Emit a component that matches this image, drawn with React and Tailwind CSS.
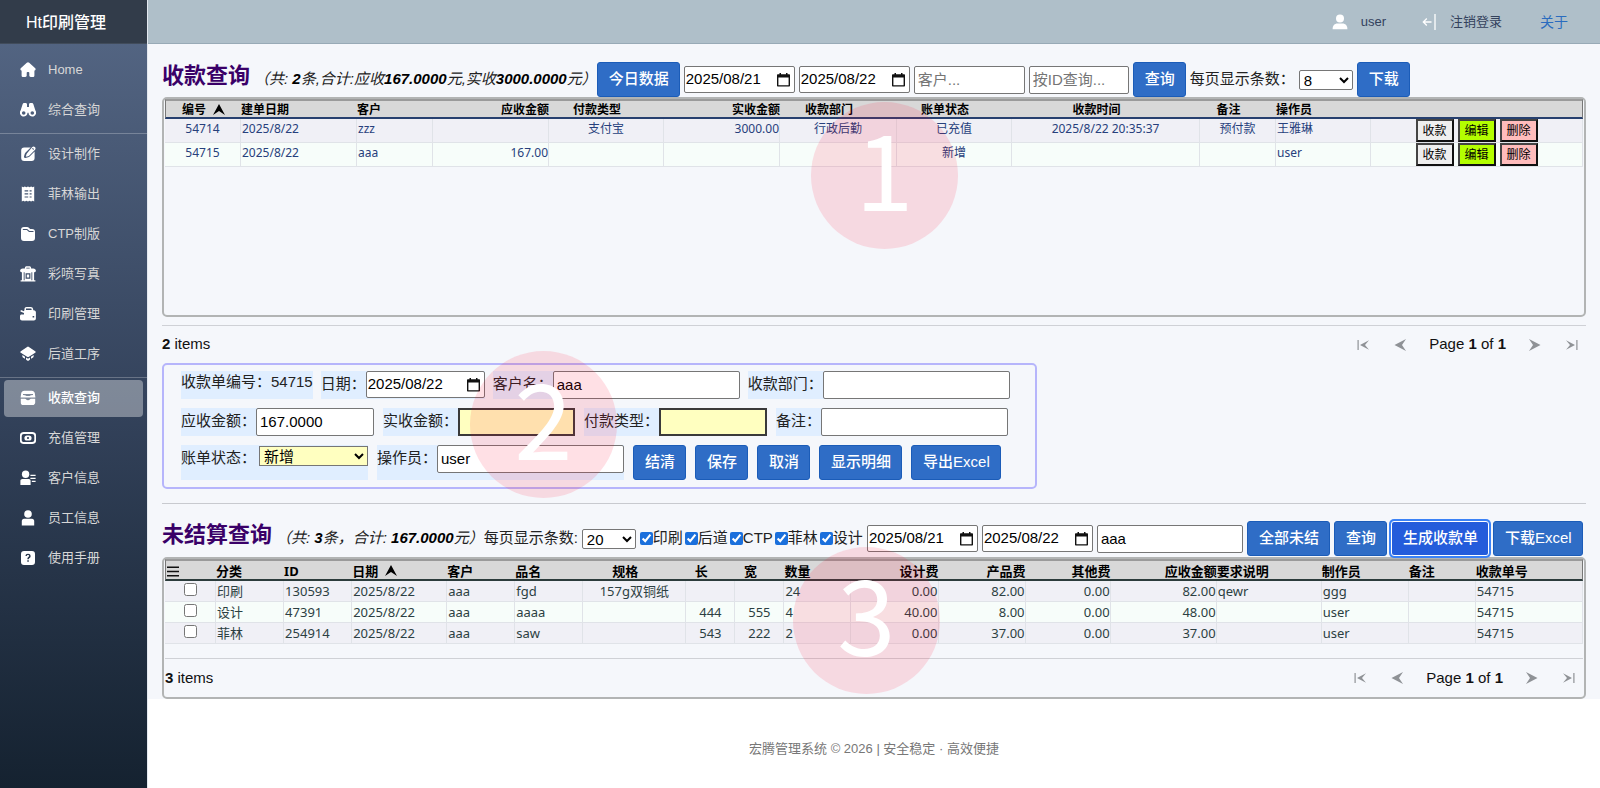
import React, { useState } from "react";

/* ---------- icons ---------- */

function Icon({ children, size = "size-4" }) {
  return (
    <svg viewBox="0 0 16 16" className={`${size} shrink-0`} fill="currentColor" aria-hidden="true">
      {children}
    </svg>
  );
}

const icons = {
  home: <path d="M6.800.8a1.800 1.800 0 0 1 2.400 0l5.800 5.100c1 .9.700 2.300-.6 2.600V13.400c0 .9-.7 1.600-1.600 1.600h-2.100c-.8 0-1.400-.6-1.400-1.400v-2.800c0-.5-.4-.8-.8-.8h-1c-.5 0-.8.4-.8.8v2.800c0 .8-.6 1.400-1.400 1.400H3.200c-.9 0-1.600-.7-1.600-1.600V8.500C.3 8.200 0 6.800 1 5.900z" />,
  binoculars: (
    <path fillRule="evenodd" d="M4.200 1h1.400C6.400 1 7 1.600 7 2.400V5h2V2.400C9 1.600 9.600 1 10.400 1h1.400c.7 0 1.300.4 1.500 1.100l2.100 6.500a3.800 3.800 0 1 1-6.900 2.100h-1A3.800 3.800 0 1 1 .6 8.600l2.100-6.500C2.900 1.400 3.500 1 4.200 1zM3.700 9.200a1.800 1.800 0 1 0 0 3.600 1.800 1.800 0 0 0 0-3.600zm8.600 0a1.800 1.800 0 1 0 0 3.600 1.800 1.800 0 0 0 0-3.600z" />
  ),
  edit: (
    <>
      <path d="M4.200 1.400h6.500L5.600 6.500c-.4.4-.7.900-.9 1.500l-.7 2.600c-.2.900.500 1.700 1.400 1.400l2.700-.7c.6-.1 1.100-.4 1.500-.8l5-5V12a3 3 0 0 1-3 3H4.200a3 3 0 0 1-3-3V4.400a3 3 0 0 1 3-3z" />
      <path d="M12.300.9a2 2 0 0 1 2.800 2.800L9.100 9.700a2 2 0 0 1-.9.500l-2.400.6.6-2.400c.1-.3.300-.6.500-.9zM12 2.600l1.300 1.300.7-.8-1.200-1.200z" fillRule="evenodd" />
    </>
  ),
  receipt: (
    <path fillRule="evenodd" d="M1.800.4l1.500.9L4.900.4l1.500.9L8 .4l1.500.9 1.600-.9 1.500.9 1.600-.9v15.200l-1.600-.9-1.500.9-1.600-.9-1.500.9-1.600-.9-1.500.9-1.600-.9-1.500.9zM4.600 4.200v1.200h3.600V4.200zm5 0v1.200h2V4.200zm-5 3.100v1.200h3.600V7.300zm5 0v1.200h2V7.300zm-5 3.100v1.200h3.600v-1.200zm5 0v1.200h2v-1.200z" />
  ),
  folder: (
    <path fillRule="evenodd" d="M4 1h3.200c.5 0 1 .2 1.400.5L10.200 3H12a3 3 0 0 1 3 3v6a3 3 0 0 1-3 3H4a3 3 0 0 1-3-3V4a3 3 0 0 1 3-3zM2.900 3.300c-.3.300-.2.700.2.700H6.300c.3 0 .6.100.8.300l1.300 1.200c.5.400 1 .6 1.600.6h3.800c-.1-.7-.5-1-1.100-1H10c-.3 0-.6-.1-.8-.3L7.800 3.500c-.5-.4-1-.5-1.500-.5H3.700c-.3 0-.6.100-.8.3z" />
  ),
  photo: (
    <path fillRule="evenodd" d="M4.900 2.400v-.6C4.900.9 5.700.2 6.600.2h2.800c.9 0 1.700.7 1.700 1.600v.6h2.200c1.600 0 2.600 1 2.600 2.400 0 .8-.6 1.400-1.400 1.400h-.4v8h1.300v1.400H.6v-1.400h1.300v-8h-.4C.7 6.200.1 5.600.1 4.800c0-1.400 1-2.400 2.600-2.400zm1.400 0h3.400v-.7H6.300zM3.700 6.200v8h.9v-8zm7.700 0v8h.9v-8zM5.600 7.200v5.600h4.800V7.200zm1.200 1.200h2.400v3.200H6.800z" />
  ),
  printer: (
    <path fillRule="evenodd" d="M4.500 3.400V3C4.500 1.700 5.300.9 6.600.9h4.200c1.300 0 2.100.7 2.300 2l.2 1.300h.5c1.200 0 2.100 1 2.100 2.100V12.600c0 1.100-.9 2-2 2H2c-1.100 0-2-.9-2-2V10c0-1 .7-1.600 1.600-1.600H4V7.100L.4 5.400l.5-1.400 3.100 1.300zM6 2.700v1.400h5.700l-.2-1.100c-.1-.5-.4-.6-.8-.6H6.500c-.4 0-.5.100-.5.300zM12.600 10v1.600h1.600V10z" />
  ),
  layers: (
    <>
      <path d="M7.100.9a1.700 1.700 0 0 1 1.800 0l6.300 4.300c.6.400.6 1.200 0 1.600l-2.700 1.800L8.900 10.800a1.700 1.700 0 0 1-1.800 0L.8 6.800a1 1 0 0 1 0-1.600z" />
      <path d="M2.400 9.100l2.600 1.700v2l-2.100-1.400c-.4-.2-.5-.5-.5-.9zm3.600 2.500l1 .6c.6.400 1.400.4 2 0l1-.6v2l-1.100.8c-.6.400-1.200.4-1.800 0L6 13.600zm5-.8l2.600-1.700v1.400c0 .4-.1.700-.5.900L11 12.800z" />
    </>
  ),
  drawer: (
    <>
      <path d="M4.200.8h7.600c1.500 0 2.700 1 3 2.400l.6 4.200H.6l.6-4.200C1.500 1.800 2.700.8 4.200.8zM3 4v1l1.800.2c.3 0 .5.2.7.4.3.3.6.5 1 .5h3c.4 0 .7-.2 1-.5.2-.2.4-.4.7-.4L13 5V4z" fillRule="evenodd" />
      <path d="M.8 8.700h4.300c.4 0 .7.2.9.5.4.7 1.100 1.100 2 1.100s1.600-.4 2-1.100c.2-.3.5-.5.9-.5h4.300v3.700c0 1.500-1.100 2.600-2.600 2.600H3.400a2.600 2.600 0 0 1-2.600-2.600z" />
    </>
  ),
  money: (
    <>
      <rect x=".8" y="3" width="14.400" height="10" rx="3" fill="none" stroke="currentColor" strokeWidth="1.800" />
      <path fillRule="evenodd" d="M7 5.400h2a2.600 2.600 0 0 1 0 5.200H7a2.600 2.600 0 0 1 0-5.200zm1 1.500a1.100 1.100 0 1 0 0 2.200 1.100 1.100 0 0 0 0-2.200z" />
    </>
  ),
  contact: (
    <>
      <circle cx="5.600" cy="4.300" r="3.700" />
      <path d="M2.400 9h6.400c1 0 1.800.8 1.800 1.800V15H.4v-4.200C.4 9.800 1.300 9 2.400 9zM10.400 4.800h5.200v1.300h-5.200zm0 3h5.200v1.300h-5.200zm1.400 3h3.800v1.300h-3.800z" />
    </>
  ),
  person: (
    <>
      <circle cx="8" cy="4" r="3.800" />
      <path d="M4 8.800h8c1.200 0 2.200 1 2.200 2.200v4.400H1.800V11C1.800 9.800 2.800 8.800 4 8.800z" />
    </>
  ),
  help: (
    <path fillRule="evenodd" d="M4 1h8a3 3 0 0 1 3 3v8a3 3 0 0 1-3 3H4a3 3 0 0 1-3-3V4a3 3 0 0 1 3-3zm4 2.800c-1.500 0-2.500.9-2.500 2.200h1.400c0-.6.400-1 1.100-1s1.100.4 1.100.9c0 .5-.2.700-.8 1.200-.7.600-1 1.100-.9 2.200h1.400c0-.6.200-.8.800-1.300.6-.5 1-1.100 1-2.100 0-1.300-1.100-2.100-2.600-2.100zm-.7 6.500v1.500h1.500v-1.500z" />
  ),
};

function SortArrow({ hidden }) {
  return (
    <svg viewBox="0 0 12 12" className={`ml-[7px] size-3 shrink-0 ${hidden ? "invisible" : ""}`} aria-hidden="true">
      <path d="M6 0l6 11-6-4-6 4z" fill="#000" />
    </svg>
  );
}

/* ---------- shared controls ---------- */

function PrimaryButton({ children, focused }) {
  return (
    <button
      type="button"
      className={`h-[35px] shrink-0 whitespace-nowrap rounded-[3px] border pr-[10px] pl-[11px] font-medium text-white ${
        focused
          ? "border-white bg-[#245cdb] ring-2 ring-[#3b82f6]"
          : "border-[#1b5cb8] bg-[#2f6dc6]"
      }`}
    >
      {children}
    </button>
  );
}

function DateBox({ label, id, value, width = "w-[111px]" }) {
  return (
    <span className={`flex h-[27px] shrink-0 items-center rounded-[2px] border border-[#767676] bg-white pr-1 ${width}`}>
      <input id={id} type="text" aria-label={label} defaultValue={value} className="w-full min-w-0 bg-transparent pl-px text-black outline-none" />
      <svg viewBox="0 0 13 14" className="h-[14px] w-[13px] shrink-0" aria-hidden="true">
        <path fillRule="evenodd" fill="#111" d="M2.500 0h1.500v1.300h5V0h1.500v1.300H12c.6 0 1 .4 1 1V12.600c0 .6-.4 1-1 1H1c-.6 0-1-.4-1-1V2.300c0-.6.4-1 1-1h1.500zM1.400 4.600v7.600h10.200V4.600z" />
      </svg>
    </span>
  );
}

const boxClass = "h-[28px] shrink-0 rounded-[2px] border border-[#767676] bg-white px-[3px] pb-px text-black placeholder:text-[#757575]";
const sizeSelectClass = "h-5 w-[54px] shrink-0 rounded-[2px] border border-[#767676] bg-white font-['Liberation_Sans',sans-serif] text-black";

function PagerIcon({ kind }) {
  const shapes = {
    first: <path d="M.5 1h1.200v10H.5zM12 1.200L8 6l4 4.800L3 6z" />,
    prev: <path d="M12 0L8 6l4 6L.5 6z" />,
    next: <path d="M0 0l4 6-4 6 11.500-6z" />,
    last: <path d="M10.300 1h1.200v10h-1.200zM0 1.200L4 6l-4 4.800L9 6z" />,
  };
  return (
    <svg viewBox="0 0 12 12" className="size-3" fill="#8f9296" aria-hidden="true">
      {shapes[kind]}
    </svg>
  );
}

function Pager({ count, height }) {
  const btn = (kind, label) => (
    <button type="button" aria-label={label} className="flex size-7 items-center justify-center">
      <PagerIcon kind={kind} />
    </button>
  );
  return (
    <div className={`flex items-center justify-between text-[#111] ${height}`}>
      <div>
        <b>{count}</b> items
      </div>
      <nav className="flex items-center gap-[9px]" aria-label="分页">
        {btn("first", "首页")}
        {btn("prev", "上一页")}
        <div className="mx-[6px]">
          Page <b>1</b> of <b>1</b>
        </div>
        {btn("next", "下一页")}
        {btn("last", "末页")}
      </nav>
    </div>
  );
}

/* ---------- tables ---------- */

const alignClass = { left: "text-left pl-px", center: "text-center", right: "text-right" };
const justifyClass = { left: "justify-start", center: "justify-center", right: "justify-end" };

function Grid({ columns, rows, size, headHeight, rowHeight, tone, rule }) {
  const total = columns.reduce((sum, c) => sum + c.w, 0);
  return (
    <table className={`w-full table-fixed border-separate border-spacing-0 font-['Noto_Sans','Noto_Sans_CJK_SC',sans-serif] ${size}`}>
      <colgroup>
        {columns.map((c, i) => (
          <col key={i} style={{ width: `${(c.w / total) * 100}%` }} />
        ))}
      </colgroup>
      <thead>
        <tr>
          {columns.map((c, i) => (
            <th
              key={i}
              className={`border-t-2 border-b-2 border-t-[#9a9a9a] bg-[#d8d8d8] p-0 font-bold text-black first:border-l first:border-l-[#777] last:border-r last:border-r-[#777] ${headHeight} ${rule}`}
            >
              <div className={`flex items-center pt-[2px] whitespace-nowrap leading-[14px] ${justifyClass[c.align]}`}>
                {c.head}
                {c.head && (c.sorted || c.align === "center") ? <SortArrow hidden={!c.sorted} /> : null}
              </div>
            </th>
          ))}
        </tr>
      </thead>
      <tbody className={tone}>
        {rows.map((row, r) => (
          <tr key={r} className="odd:bg-[#f0f0f6] even:bg-[#f7fdfa]">
            {row.map((cell, i) => (
              <td
                key={i}
                className={`border-r border-b border-[#e0e3e8] py-0 align-top whitespace-nowrap ${rowHeight} ${alignClass[columns[i].align]}`}
              >
                {cell}
              </td>
            ))}
          </tr>
        ))}
      </tbody>
    </table>
  );
}

function RowActions() {
  const base = "h-[23px] w-[38px] border-2 border-t-[#444] border-l-[#444] border-r-[#111] border-b-[#111] text-xs leading-4 text-black";
  return (
    <div className="flex justify-center gap-1">
      <button type="button" className={`${base} bg-[#efefef]`}>收款</button>
      <button type="button" className={`${base} bg-[#b4ff00]`}>编辑</button>
      <button type="button" className={`${base} bg-[#ffbcbc]`}>删除</button>
    </div>
  );
}

const receiptColumns = [
  { head: "编号", w: 76, align: "center", sorted: true },
  { head: "建单日期", w: 116, align: "left" },
  { head: "客户", w: 76, align: "left" },
  { head: "应收金额", w: 116, align: "right" },
  { head: "付款类型", w: 115, align: "center" },
  { head: "实收金额", w: 116, align: "right" },
  { head: "收款部门", w: 117, align: "center" },
  { head: "账单状态", w: 115, align: "center" },
  { head: "收款时间", w: 188, align: "center" },
  { head: "备注", w: 76, align: "center" },
  { head: "操作员", w: 95, align: "left" },
  { head: "", w: 212, align: "center" },
];

const receiptRows = [
  ["54714", "2025/8/22", "zzz", "", "支付宝", "3000.00", "行政后勤", "已充值", "2025/8/22 20:35:37", "预付款", "王雅琳", <RowActions />],
  ["54715", "2025/8/22", "aaa", "167.00", "", "", "", "新增", "", "", "user", <RowActions />],
];

const menuGlyph = (
  <svg viewBox="0 0 12 11" className="ml-px h-[11px] w-3" aria-hidden="true">
    <path d="M0 .5h12v1.400H0zM0 4.800h12v1.400H0zM0 9.100h12v1.400H0z" fill="#111" />
  </svg>
);

const openColumns = [
  { head: menuGlyph, w: 51, align: "left" },
  { head: "分类", w: 68, align: "left" },
  { head: "ID", w: 68, align: "left" },
  { head: "日期", w: 95, align: "left", sorted: true },
  { head: "客户", w: 68, align: "left" },
  { head: "品名", w: 68, align: "left" },
  { head: "规格", w: 103, align: "center" },
  { head: "长", w: 49, align: "center" },
  { head: "宽", w: 49, align: "center" },
  { head: "数量", w: 67, align: "left" },
  { head: "设计费", w: 87, align: "right" },
  { head: "产品费", w: 87, align: "right" },
  { head: "其他费", w: 85, align: "right" },
  { head: "应收金额", w: 106, align: "right" },
  { head: "要求说明", w: 105, align: "left" },
  { head: "制作员", w: 87, align: "left" },
  { head: "备注", w: 67, align: "left" },
  { head: "收款单号", w: 107, align: "left" },
];

const pick = (id) => (
  <div className="flex justify-center pt-[2px]">
    <input type="checkbox" aria-label={`选择 ${id}`} className="size-[13px]" />
  </div>
);

const openRows = [
  [pick("130593"), "印刷", "130593", "2025/8/22", "aaa", "fgd", "157g双铜纸", "", "", "24", "0.00", "82.00", "0.00", "82.00", "qewr", "ggg", "", "54715"],
  [pick("47391"), "设计", "47391", "2025/8/22", "aaa", "aaaa", "", "444", "555", "4", "40.00", "8.00", "0.00", "48.00", "", "user", "", "54715"],
  [pick("254914"), "菲林", "254914", "2025/8/22", "aaa", "saw", "", "543", "222", "2", "0.00", "37.00", "0.00", "37.00", "", "user", "", "54715"],
];

/* ---------- sidebar ---------- */

const navGroups = [
  [["home", "Home"], ["binoculars", "综合查询"]],
  [["edit", "设计制作"], ["receipt", "菲林输出"], ["folder", "CTP制版"], ["photo", "彩喷写真"], ["printer", "印刷管理"], ["layers", "后道工序"]],
  [["drawer", "收款查询"], ["money", "充值管理"], ["contact", "客户信息"], ["person", "员工信息"], ["help", "使用手册"]],
];

function Sidebar() {
  return (
    <aside className="flex w-[148px] shrink-0 flex-col border-r border-[#e3e8ef] bg-linear-to-b from-[#566886] via-[#34435c] to-[#14212f] text-[13px]">
      <div className="flex h-11 items-center border-b border-[#414c5b] bg-[#323c4a] pt-[3px] pl-[26px] text-base font-medium text-white">Ht印刷管理</div>
      <nav className="flex flex-col pt-[6px]">
        {navGroups.map((group, g) => (
          <ul key={g} className={g > 0 ? "mt-[3px] border-t border-white/25" : ""}>
            {group.map(([icon, label]) => {
              const active = label === "收款查询";
              return (
                <li key={label} className="flex h-10 items-center px-1">
                  <a
                    href="#"
                    aria-current={active ? "page" : undefined}
                    className={`flex h-[37px] w-full items-center gap-3 rounded-[4px] pl-4 ${
                      active ? "bg-white/37 font-medium text-white" : "text-[#d7d7d7]"
                    }`}
                  >
                    <span className="text-white">
                      <Icon>{icons[icon]}</Icon>
                    </span>
                    {label}
                  </a>
                </li>
              );
            })}
          </ul>
        ))}
      </nav>
    </aside>
  );
}

/* ---------- detail form ---------- */

function Field({ label, id, children }) {
  return (
    <div className="flex shrink-0 bg-[#e0eeff]">
      <label htmlFor={id} className="leading-[26px] whitespace-nowrap">{label}</label>
      {children}
    </div>
  );
}

function DetailForm() {
  return (
    <form className="flex w-full max-w-[875px] flex-col gap-[9px] rounded-[5px] border-2 border-[#b6b5fb] px-[17px] pt-[6px] pb-[7px]">
      <div className="flex gap-2">
        <div className="bg-[#e0eeff] leading-[22px]">收款单编号：54715</div>
        <Field label="日期：" id="f-date">
          <DateBox id="f-date" label="日期" value="2025/08/22" width="w-[119px]" />
        </Field>
        <Field label="客户名：" id="f-cust">
          <input id="f-cust" defaultValue="aaa" className={`${boxClass} w-[187px]`} />
        </Field>
        <Field label="收款部门：" id="f-dept">
          <input id="f-dept" className={`${boxClass} w-[187px]`} />
        </Field>
      </div>
      <div className="flex gap-[9px]">
        <Field label="应收金额：" id="f-due">
          <input id="f-due" defaultValue="167.0000" className={`${boxClass} w-[118px]`} />
        </Field>
        <Field label="实收金额：" id="f-paid">
          <input id="f-paid" className="h-[28px] w-[117px] border-2 border-[#3a3a3a] bg-[#ffffc0] px-[3px]" />
        </Field>
        <Field label="付款类型：" id="f-type">
          <input id="f-type" className="h-[28px] w-[108px] border-2 border-[#3a3a3a] bg-[#ffffc0] px-[3px]" />
        </Field>
        <Field label="备注：" id="f-note">
          <input id="f-note" className={`${boxClass} w-[187px]`} />
        </Field>
      </div>
      <div className="flex gap-[9px]">
        <Field label="账单状态：" id="f-state">
          <select id="f-state" className="mt-px ml-[3px] h-5 w-[109px] border border-[#767676] bg-[#ffffc0] text-black">
            <option>新增</option>
          </select>
        </Field>
        <Field label="操作员：" id="f-op">
          <input id="f-op" defaultValue="user" className={`${boxClass} w-[187px]`} />
        </Field>
        <PrimaryButton>结清</PrimaryButton>
        <PrimaryButton>保存</PrimaryButton>
        <PrimaryButton>取消</PrimaryButton>
        <PrimaryButton>显示明细</PrimaryButton>
        <PrimaryButton>导出Excel</PrimaryButton>
      </div>
    </form>
  );
}

function Filter({ label }) {
  const [on, setOn] = useState(true);
  return (
    <label className="flex items-center">
      <input type="checkbox" checked={on} onChange={(e) => setOn(e.target.checked)} className="size-[13px] accent-[#1a6fdc]" />
      {label}
    </label>
  );
}

function SectionTitle({ title, children }) {
  return (
    <div className="flex items-center gap-1 whitespace-nowrap">
      <h1 className="pb-2 text-[22px] font-bold text-[#3a0068]">{title}</h1>
      <i className="pb-px">{children}</i>
    </div>
  );
}

function Marker({ n, place }) {
  return (
    <div
      className={`pointer-events-none absolute flex size-[147px] items-center justify-center rounded-full bg-[#ff0028]/12 pb-5 font-['Noto_Sans_CJK_SC',sans-serif] text-[105px] leading-[127px] text-white ${place}`}
    >
      {n}
    </div>
  );
}

export default function App() {
  return (
    <div className="relative flex min-h-screen bg-white font-['Liberation_Sans','Noto_Sans_CJK_SC',sans-serif] text-[15px] text-[#222]">
      <Sidebar />
      <div className="flex min-w-0 flex-1 flex-col">
        <header className="flex h-11 items-center justify-end border-b border-[#98aab6] bg-[#afbfc9] pr-8 text-[13px] text-[#33415c]">
          <span className="mr-[13px] text-white">
            <Icon>
              <circle cx="8" cy="4.500" r="4" />
              <path d="M.6 15.200c0-3.500 2-5.600 4.900-5.600h5c2.900 0 4.900 2.100 4.900 5.600z" />
            </Icon>
          </span>
          <span>user</span>
          <a href="#" className="ml-9 flex items-center gap-[14px]">
            <svg viewBox="0 0 14 16" className="h-4 w-[14px]" fill="none" stroke="#fff" aria-hidden="true">
              <path d="M13 0v16M9.500 8H1.500M4.800 4.500L1.300 8l3.500 3.500" strokeWidth="1.300" />
            </svg>
            注销登录
          </a>
          <a href="#" className="ml-[38px] text-sm text-[#2a6cbf]">关于</a>
        </header>

        <main className="bg-[#f5f7fb] px-[14px] pt-[18px]">
          <div className="flex h-[35px] items-center">
            <SectionTitle title="收款查询">
              （共: <b className="text-black">2</b>条,合计:应收<b className="text-black">167.0000</b>元,实收<b className="text-black">3000.0000</b>元）
            </SectionTitle>
            <div className="flex items-center gap-1">
              <PrimaryButton>今日数据</PrimaryButton>
              <DateBox label="开始日期" value="2025/08/21" />
              <DateBox label="结束日期" value="2025/08/22" />
              <input aria-label="客户" placeholder="客户..." className={`${boxClass} w-[111px]`} />
              <input aria-label="按ID查询" placeholder="按ID查询..." className={`${boxClass} w-[100px]`} />
              <PrimaryButton>查询</PrimaryButton>
              <label htmlFor="size-a" className="whitespace-nowrap">每页显示条数：</label>
              <select id="size-a" defaultValue="8" className={sizeSelectClass}>
                <option>8</option>
              </select>
              <PrimaryButton>下载</PrimaryButton>
            </div>
          </div>

          <section className="h-[220px] rounded-[5px] border-2 border-[#b2b4b4] px-px">
            <Grid
              columns={receiptColumns}
              rows={receiptRows}
              size="text-xs"
              headHeight="h-[20px]"
              rowHeight="h-6 leading-5"
              tone="text-[#27407c]"
              rule="border-b-[#27406f]"
            />
          </section>

          <hr className="mt-2 border-[#cfd1d6]" />
          <Pager count="2" height="h-[37px]" />

          <DetailForm />

          <hr className="mt-[14px] border-[#c8cacf]" />
          <div className="mt-[17px] mb-px flex h-[35px] items-center">
            <SectionTitle title="未结算查询">
              （共: <b className="text-black">3</b>条，合计: <b className="text-black">167.0000</b>元）
            </SectionTitle>
            <div className="flex items-center gap-1">
              <label htmlFor="size-b" className="whitespace-nowrap">每页显示条数:</label>
              <select id="size-b" defaultValue="20" className={sizeSelectClass}>
                <option>20</option>
              </select>
              <div className="flex gap-[2px] whitespace-nowrap">
                <Filter label="印刷" />
                <Filter label="后道" />
                <Filter label="CTP" />
                <Filter label="菲林" />
                <Filter label="设计" />
              </div>
              <DateBox label="开始日期" value="2025/08/21" />
              <DateBox label="结束日期" value="2025/08/22" />
              <input aria-label="客户" defaultValue="aaa" className={`${boxClass} w-[146px]`} />
              <PrimaryButton>全部未结</PrimaryButton>
              <PrimaryButton>查询</PrimaryButton>
              <PrimaryButton focused>生成收款单</PrimaryButton>
              <PrimaryButton>下载Excel</PrimaryButton>
            </div>
          </div>

          <section className="rounded-[5px] border-2 border-[#b2b4b4] px-px">
            <Grid
              columns={openColumns}
              rows={openRows}
              size="text-[13px]"
              headHeight="h-[22px]"
              rowHeight="h-[21px] leading-5"
              tone="text-[#2c3f42]"
              rule="border-b-[#2c3c3c]"
            />
            <hr className="mt-[14px] border-[#cfd1d6]" />
            <Pager count="3" height="h-[38px]" />
          </section>
        </main>

        <footer className="py-10 text-center text-[13px] text-[#777]">宏腾管理系统 © 2026 | 安全稳定 · 高效便捷</footer>
      </div>

      <Marker n="1" place="top-[102px] left-[811px]" />
      <Marker n="2" place="top-[351px] left-[470px]" />
      <Marker n="3" place="top-[547px] left-[793px]" />
    </div>
  );
}
